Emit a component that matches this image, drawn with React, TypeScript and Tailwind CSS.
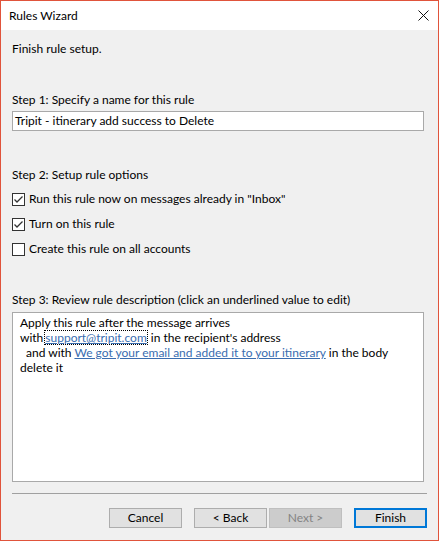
import React from 'react';

function CheckBox({ checked, label }: { checked: boolean; label: string }) {
  return (
    <div className="flex items-center h-[16px]">
      <div className="w-[13px] h-[13px] border border-[#333333] bg-white flex items-center justify-center">
        {checked && (
          <svg width="11" height="11" viewBox="0 0 11 11">
            <polyline points="1.5,5.5 4,8 9.5,2.5" fill="none" stroke="#333333" strokeWidth="1.3" />
          </svg>
        )}
      </div>
      <span className="ml-[4px]">{label}</span>
    </div>
  );
}

function Button({ label, variant = 'normal' }: { label: string; variant?: 'normal' | 'disabled' | 'default' }) {
  const styles = {
    normal: 'border border-[#adadad] bg-[#e1e1e1] text-black',
    disabled: 'border border-[#bfbfbf] bg-[#cccccc] text-[#838383]',
    default: 'border-2 border-[#0078d7] bg-[#e1e1e1] text-black',
  };
  return (
    <div className={`w-[73px] h-[20px] flex items-center justify-center ${styles[variant]}`}>
      {label}
    </div>
  );
}

export default function App() {
  return (
    <div className="w-[439px] h-[541px] border border-[#e0533b] bg-[#f0f0f0] flex flex-col font-['Lato',sans-serif] text-[12px] leading-[16px] text-black">
      <div className="h-[29px] bg-white flex items-center justify-between pl-[8px] pr-[9px]">
        <span className="mt-[1px]">Rules Wizard</span>
        <svg width="11" height="11" viewBox="0 0 11 11">
          <path d="M0.5 0.5 L10.5 10.5 M10.5 0.5 L0.5 10.5" stroke="#111" strokeWidth="1" />
        </svg>
      </div>

      <div className="flex flex-col pl-[11px] pr-[14px]">
        <div className="mt-[11px]">Finish rule setup.</div>

        <div className="mt-[35px]">Step 1: Specify a name for this rule</div>
        <div className="mt-[3px] h-[20px] border border-[#a9a9a9] bg-white flex items-center pl-[2px]">
          Tripit - itinerary add success to Delete
        </div>

        <div className="mt-[36px]">Step 2: Setup rule options</div>
        <div className="mt-[8px]">
          <CheckBox checked label={'Run this rule now on messages already in "Inbox"'} />
        </div>
        <div className="mt-[9px]">
          <CheckBox checked label="Turn on this rule" />
        </div>
        <div className="mt-[9px]">
          <CheckBox checked={false} label="Create this rule on all accounts" />
        </div>

        <div className="mt-[35px]">Step 3: Review rule description (click an underlined value to edit)</div>
        <div className="mt-[4px] h-[170px] border border-[#a9a9a9] bg-white pt-[2px] pl-[7px] leading-[15px]">
          <div>Apply this rule after the message arrives</div>
          <div>
            with<span className="outline outline-1 outline-dotted outline-black -outline-offset-1 px-[1px] ml-[1px] text-[#3a6db0] underline">support@tripit.com</span> in the recipient's address
          </div>
          <div className="pl-[6px]">
            and with <span className="text-[#3a6db0] underline">We got your email and added it to your itinerary</span> in the body
          </div>
          <div>delete it</div>
        </div>

        <div className="mt-[11px] h-[1px] bg-[#a0a0a0] mr-[-3px]" />

        <div className="mt-[14px] flex justify-end mr-[-3px]">
          <Button label="Cancel" />
          <div className="ml-[12px]">
            <Button label="< Back" />
          </div>
          <div className="ml-[2px]">
            <Button label="Next >" variant="disabled" />
          </div>
          <div className="ml-[12px]">
            <Button label="Finish" variant="default" />
          </div>
        </div>
      </div>
    </div>
  );
}
